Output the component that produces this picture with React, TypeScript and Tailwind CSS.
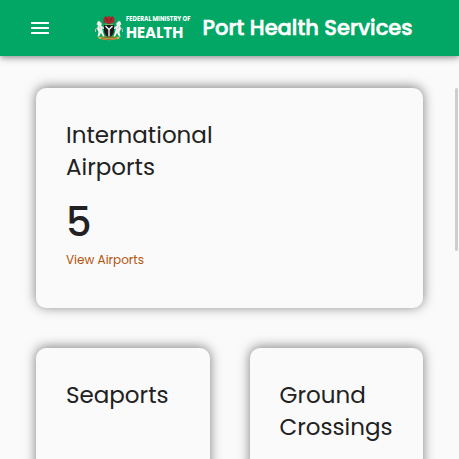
import type { ReactNode } from "react";

function CoatOfArms() {
  return (
    <svg viewBox="0 0 30 26" className="h-[26px] w-[30px] shrink-0" aria-hidden="true">
      <ellipse cx="15" cy="22" rx="9" ry="2" fill="#4d9a35" />
      <path d="M4 21.5 Q15 25.5 26 21.5 L25 23.8 Q15 26.5 5 23.8Z" fill="#d8b84a" />
      <path d="M7 23.6 Q15 25.5 23 23.6" fill="none" stroke="#a5492c" strokeWidth="0.8" />
      <path d="M9.5 3.5 L11.5 1 L13.5 2.2 L15 0.8 L16.5 2.2 L18.5 1 L20.5 3.5 L20.5 8.5 L17.5 7.5 L16.5 9.3 H13.5 L12.5 7.5 L9.5 8.5Z" fill="#a82a2c" />
      <path d="M12 2.8 L13.8 6.5 M18 2.8 L16.2 6.5" stroke="#5f2025" strokeWidth="0.8" />
      <path d="M11 9.5 H19" stroke="#8cba55" strokeWidth="0.8" />
      <path d="M10 10 H20 V15 Q20 20.5 15 22.3 Q10 20.5 10 15Z" fill="#1b1b1d" />
      <path d="M11.5 11 L15 14.5 L18.5 11 M15 14 V21.5" fill="none" stroke="#f3f3f3" strokeWidth="1.4" />
      <g fill="#f1efec">
        <path d="M4 6 L6 6.5 L8 9 L7 10.5 L9.8 12.5 L10 14 L8 13.5 L9 17 L10.5 21.5 H9 L7 18 L5 21.5 H3.5 L4.5 17 L3 14 L4 10 L2.5 9.5Z" />
        <path d="M26 6 L24 6.5 L22 9 L23 10.5 L20.2 12.5 L20 14 L22 13.5 L21 17 L19.5 21.5 H21 L23 18 L25 21.5 H26.5 L25.5 17 L27 14 L26 10 L27.5 9.5Z" />
      </g>
      <path d="M3.5 13 Q0.5 13 1.5 17 M26.5 13 Q29.5 13 28.5 17 M5 11 L6.5 14 M25 11 L23.5 14" fill="none" stroke="#b9c8bb" strokeWidth="0.9" />
      <path d="M11.5 22.3 H18.5" stroke="#c74735" strokeWidth="1" strokeDasharray="1 1" />
    </svg>
  );
}

function StatCard({ title, wide = false, children }: { title: string; wide?: boolean; children?: ReactNode }) {
  return (
    <section
      className={`h-[220px] rounded-[10px] bg-[#fafafa] px-[30px] py-[31px] shadow-[0_-1px_12px_rgba(0,0,0,0.5)] ${wide ? "col-span-2" : ""}`}
    >
      <h2 className={`text-[23px] leading-8 ${wide ? "w-1/2" : ""}`}>{title}</h2>
      {children}
    </section>
  );
}

export default function App() {
  return (
    <div className="relative flex h-screen flex-col overflow-hidden bg-[#fafafa] font-['Poppins','Inter',sans-serif] text-[#212121]">
      <header className="z-10 flex h-14 shrink-0 items-center bg-[#03a765] pl-7 text-white shadow-[0_2px_4px_-1px_rgba(0,0,0,0.2),0_4px_5px_0_rgba(0,0,0,0.14),0_1px_10px_0_rgba(0,0,0,0.12)]">
        <button type="button" aria-label="Open menu" className="size-6">
          <svg viewBox="0 0 24 24" className="size-6" fill="currentColor" aria-hidden="true">
            <path d="M3 18h18v-2H3v2zm0-5h18v-2H3v2zm0-7v2h18V6H3z" />
          </svg>
        </button>
        <a href="#home" className="ml-[42px] flex items-center gap-0.5">
          <CoatOfArms />
          <span className="flex flex-col font-bold whitespace-nowrap">
            <span className="text-[6px] leading-[9px]">FEDERAL MINISTRY OF</span>
            <span className="text-[15px] leading-[17px]">HEALTH</span>
          </span>
        </a>
        <h1 className="ml-3 text-[21px] leading-8 font-medium whitespace-nowrap [-webkit-text-stroke:0.6px_white]">Port Health Services</h1>
      </header>
      <main className="grid grid-cols-2 gap-10 px-9 py-8">
        <StatCard title="International Airports" wide>
          <p className="mt-[15px] text-[40px] leading-[48px] font-medium">5</p>
          <a href="#airports" className="mt-1 block text-xs leading-5 text-[#b45309]">
            View Airports
          </a>
        </StatCard>
        <StatCard title="Seaports" />
        <StatCard title="Ground Crossings" />
      </main>
      <div className="absolute top-[88px] right-px h-[163px] w-[3px] rounded-full bg-[#cecece]" />
    </div>
  );
}
